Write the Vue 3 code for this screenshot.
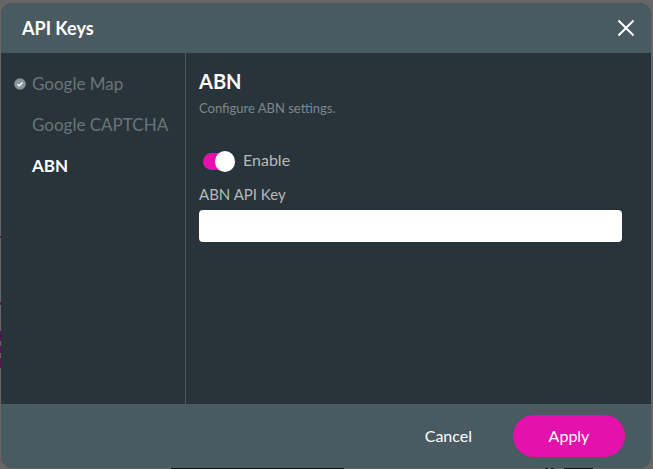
<template>
  <div class="page">
    <span v-for="m in marks" :key="m.top" class="mark" :style="{ top: m.top + 'px', height: m.height + 'px' }"></span>
    <span v-for="s in strips" :key="s.left" class="strip" :style="{ left: s.left + 'px', width: s.width + 'px' }"></span>
    <section class="modal">
      <header class="head">
        <h1>API Keys</h1>
        <button class="close" aria-label="Close">
          <svg width="18" height="18" viewBox="0 0 18 18"><path d="M1.5 1.5 16.5 16.5M16.5 1.5 1.5 16.5" stroke="#fff" stroke-width="2" fill="none"/></svg>
        </button>
      </header>
      <div class="body">
        <nav class="side">
          <div class="item">
            <svg class="check" width="12" height="12" viewBox="0 0 12 12"><circle cx="6" cy="6" r="5.8" fill="#8a9396"/><path d="M3.4 6.2 5.2 7.8 8.6 4.5" stroke="#fff" stroke-width="1.4" fill="none"/></svg>
            Google Map
          </div>
          <div class="item">Google CAPTCHA</div>
          <div class="item active">ABN</div>
        </nav>
        <main class="content">
          <h2>ABN</h2>
          <p class="desc">Configure ABN settings.</p>
          <div class="toggle-row">
            <span class="toggle"><span class="knob"></span></span>
            <span class="enable">Enable</span>
          </div>
          <label class="lbl">ABN API Key</label>
          <input class="field" type="text" />
        </main>
      </div>
      <footer class="foot">
        <button class="cancel">Cancel</button>
        <button class="apply">Apply</button>
      </footer>
    </section>
  </div>
</template>

<script setup>
const marks = [
  { top: 236, height: 2 },
  { top: 302, height: 3 },
  { top: 331, height: 10 },
  { top: 346, height: 7 },
  { top: 358, height: 10 }
]
const strips = [
  { left: 171, width: 173 },
  { left: 545, width: 3 },
  { left: 551, width: 3 },
  { left: 564, width: 29 }
]
</script>

<style>
html, body { margin: 0; background: #666; }
</style>

<style scoped>
.page {
  position: relative;
  width: 653px;
  height: 469px;
  box-sizing: border-box;
  padding: 3px 2px 1px 1px;
  background: #666;
  font-family: Lato, sans-serif;
  overflow: hidden;
}
.mark { position: absolute; left: 0; width: 1px; background: #5d1150; }
.strip { position: absolute; bottom: 0; height: 1px; background: #111; }
.modal {
  height: 465px;
  border-radius: 12px;
  overflow: hidden;
  display: flex;
  flex-direction: column;
  background: #28343a;
}
.head {
  height: 50px;
  flex: none;
  background: #4a5a61;
  display: flex;
  align-items: center;
  justify-content: space-between;
  padding: 0 16px 0 21px;
}
h1 { margin: 0; font-size: 18px; font-weight: 700; color: #fff; }
.close { background: none; border: 0; padding: 0; width: 18px; height: 18px; display: block; }
.close svg { display: block; }
.body { flex: 1; display: flex; min-height: 0; }
.side {
  width: 185px;
  flex: none;
  box-sizing: border-box;
  border-right: 1px solid #4a5a61;
  padding-top: 12px;
}
.item {
  position: relative;
  height: 41px;
  line-height: 38px;
  padding-left: 31px;
  font-size: 17px;
  color: #6a7478;
}
.item.active { color: #fff; font-weight: 700; }
.check { position: absolute; left: 13px; top: 13px; }
.content { flex: 1; padding: 15px 29px 0 13px; }
h2 { margin: 0; font-size: 20px; line-height: 26px; font-weight: 700; color: #fff; }
.desc { margin: 6px 0 0; font-size: 13px; line-height: 16px; color: #7d878b; }
.toggle-row { display: flex; align-items: center; margin-top: 35px; height: 20px; margin-left: 4px; }
.toggle { position: relative; width: 32px; height: 17px; border-radius: 9px; background: #e511ac; }
.knob { position: absolute; right: 0; top: -2px; width: 20px; height: 21px; border-radius: 50%; background: #fff; }
.enable { margin-left: 8px; font-size: 16px; line-height: 18px; padding-bottom: 2px; color: #b4babc; }
.lbl { display: block; margin-top: 14px; font-size: 15px; line-height: 18px; color: #b4babc; }
.field {
  display: block;
  margin-top: 7px;
  width: 100%;
  height: 32px;
  box-sizing: border-box;
  border: 0;
  border-radius: 4px;
  background: #fff;
}
.foot {
  height: 64px;
  flex: none;
  background: #4a5a61;
  display: flex;
  align-items: center;
  justify-content: flex-end;
  padding: 0 26px 0 0;
}
button { font-family: inherit; cursor: pointer; }
.cancel { background: none; border: 0; padding: 0 0 2px; margin-right: 41px; font-size: 16px; color: #fff; }
.apply {
  width: 112px;
  height: 42px;
  border: 0;
  border-radius: 21px;
  padding: 0 0 2px;
  background: #e511ac;
  color: #fff;
  font-size: 16px;
}
</style>
